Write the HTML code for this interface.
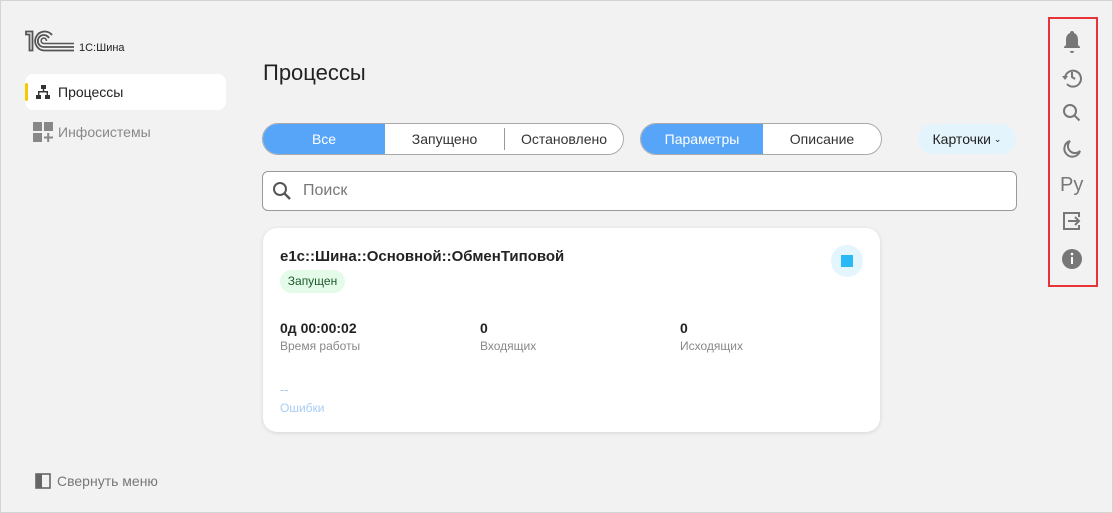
<!DOCTYPE html>
<html><head><meta charset="utf-8"><style>
*{box-sizing:border-box;margin:0;padding:0}
body{width:1113px;height:513px;background:#f2f2f2;font-family:"Liberation Sans",sans-serif;position:relative;overflow:hidden;color:#222}
.frame{position:absolute;left:0;top:0;width:1113px;height:513px;border:1px solid #d4d4d4}
.abs{position:absolute}
.nav{left:25px;top:74px;width:201px;height:36px;background:#fff;border-radius:8px}
.nav:before{content:"";position:absolute;left:0;top:9px;width:3px;height:18px;background:#f5c800;border-radius:2px}
.seg{height:32px;border:1px solid #aaa;border-radius:16px;overflow:hidden;display:flex;background:#fff;font-size:14px;color:#333}
.seg div{display:flex;align-items:center;justify-content:center;height:100%}
.seg .on{background:#56a5f8;color:#fff}
.card{left:263px;top:228px;width:617px;height:204px;background:#fff;border-radius:14px;box-shadow:0 1px 4px rgba(0,0,0,.12)}
.v{font-size:14px;color:#222;font-weight:bold}
.l{font-size:12px;color:#888}
</style></head><body>
<div class="frame"></div>
<svg class="abs" style="left:25px;top:30px" width="52" height="22" viewBox="0 0 52 22"><g fill="none" stroke="#555" stroke-width="1.8">
<path d="M1 1.5h6.5v19h-3v-16h-3.5z"/>
<path d="M27 5A9.5 9.5 0 1 0 19 20.5H49"/>
<path d="M24 8A6 6 0 1 0 19 17H49"/>
<path d="M21.5 11A2.7 2.7 0 1 0 19 13.5H49" stroke-width="1.5"/>
</g></svg>
<div class="abs" style="left:79px;top:42px;font-size:11px;color:#222">1С:Шина</div>
<div class="abs nav"></div>
<svg class="abs" style="left:35px;top:84px" width="16" height="16" viewBox="0 0 16 16" fill="#333"><rect x="6" y="1" width="5" height="4"/><rect x="1" y="11" width="5" height="4"/><rect x="10" y="11" width="5" height="4"/><rect x="3" y="7" width="10" height="1.5"/><rect x="7.8" y="4" width="1.4" height="4"/><rect x="3" y="7" width="1.4" height="4"/><rect x="11.6" y="7" width="1.4" height="4"/></svg>
<div class="abs" style="left:58px;top:84px;font-size:14px">Процессы</div>
<svg class="abs" style="left:33px;top:122px" width="20" height="20" viewBox="0 0 20 20" fill="#888"><rect x="0" y="0" width="9" height="9"/><rect x="11" y="0" width="9" height="9"/><rect x="0" y="11" width="9" height="9"/><rect x="14.2" y="11" width="2" height="9"/><rect x="11" y="14.5" width="9" height="2"/></svg>
<div class="abs" style="left:58px;top:124px;font-size:14px;color:#888">Инфосистемы</div>
<svg class="abs" style="left:35px;top:473px" width="16" height="16" viewBox="0 0 16 16"><rect x="1" y="1" width="14" height="14" fill="none" stroke="#666" stroke-width="1.6"/><rect x="1" y="1" width="6" height="14" fill="#666"/></svg>
<div class="abs" style="left:57px;top:473px;font-size:14px;color:#777">Свернуть меню</div>

<div class="abs" style="left:263px;top:60px;font-size:22px;color:#222">Процессы</div>
<div class="abs seg" style="left:262px;top:123px;width:362px"><div class="on" style="width:122px">Все</div><div style="width:120px;border-right:1px solid #999;height:22px;margin-top:4px">Запущено</div><div style="flex:1">Остановлено</div></div>
<div class="abs seg" style="left:640px;top:123px;width:242px"><div class="on" style="width:122px">Параметры</div><div style="flex:1">Описание</div></div>
<div class="abs" style="left:918px;top:124px;width:98px;height:30px;border-radius:15px;background:#e3f4fd;font-size:14px;display:flex;align-items:center;justify-content:center">Карточки <span style="font-size:9px;margin-left:3px">&#8964;</span></div>
<div class="abs" style="left:262px;top:171px;width:755px;height:40px;border:1px solid #999;border-radius:6px;background:#fff"></div>
<svg class="abs" style="left:272px;top:181px" width="20" height="20" viewBox="0 0 20 20"><circle cx="8" cy="8" r="6" fill="none" stroke="#555" stroke-width="2"/><path d="M12.5 12.5l5.5 5.5" stroke="#555" stroke-width="2.4"/></svg>
<div class="abs" style="left:303px;top:182px;font-size:16px;color:#777">Поиск</div>

<div class="abs card"></div>
<div class="abs" style="left:280px;top:248px;font-size:15px;font-weight:bold;color:#222">e1c::Шина::Основной::ОбменТиповой</div>
<div class="abs" style="left:280px;top:270px;width:65px;height:23px;border-radius:12px;background:#e5fbe9;color:#1e5a2a;font-size:12px;text-align:center;line-height:23px">Запущен</div>
<div class="abs" style="left:831px;top:245px;width:32px;height:32px;border-radius:16px;background:#e3f5fd"></div>
<div class="abs" style="left:841px;top:255px;width:12px;height:12px;background:#2bb8f7"></div>
<div class="abs v" style="left:280px;top:320px">0д 00:00:02</div><div class="abs l" style="left:280px;top:339px">Время работы</div>
<div class="abs v" style="left:480px;top:320px">0</div><div class="abs l" style="left:480px;top:339px">Входящих</div>
<div class="abs v" style="left:680px;top:320px">0</div><div class="abs l" style="left:680px;top:339px">Исходящих</div>
<div class="abs" style="left:280px;top:382px;font-size:13px;color:#9fc7f5">--</div>
<div class="abs l" style="left:280px;top:401px;color:#a8ccf5">Ошибки</div>

<div class="abs" style="left:1048px;top:17px;width:50px;height:270px;border:2px solid #e8333b"></div>
<svg class="abs" style="left:1060px;top:29px" width="24" height="250" viewBox="0 0 24 250" fill="#777">
<path d="M12 2a2 2 0 0 1 2 2c3 1 4 4 4 7v5l2 2v1H4v-1l2-2v-5c0-3 1-6 4-7a2 2 0 0 1 2-2zM10 22h4a2 2 0 0 1-4 0z"/>
<g fill="none" stroke="#777" stroke-width="2"><path d="M5 49a8 8 0 1 1 2 6"/><path d="M12 43v5l3 2"/></g><path d="M2 47h6l-3 4z"/>
<g fill="none" stroke="#777" stroke-width="2"><circle cx="10" cy="82" r="6"/><path d="M14.5 86.5l5 5"/>
<path d="M10 112a8 8 0 1 0 10 10a7 7 0 0 1-10-10z"/>
<path d="M19 188v-4H4v16h15v-4"/>
<path d="M8 192h11M15 188l4 4-4 4"/></g>
<circle cx="12" cy="230" r="10"/><rect x="11" y="228" width="2" height="7" fill="#fff"/><circle cx="12" cy="225" r="1.3" fill="#fff"/>
</svg>
<div class="abs" style="left:1060px;top:174px;font-size:20px;color:#777">Ру</div>
</body></html>
